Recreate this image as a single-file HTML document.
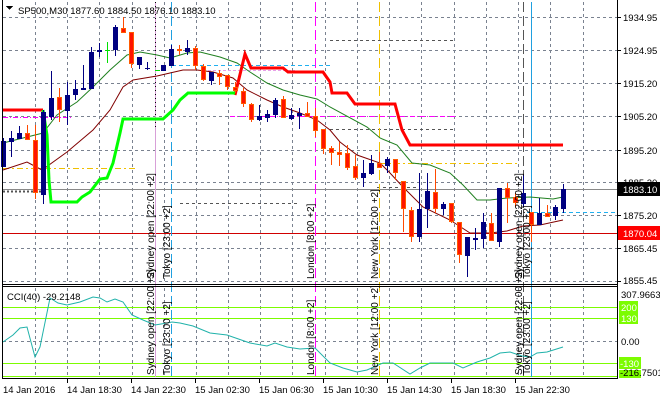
<!DOCTYPE html>
<html><head><meta charset="utf-8"><style>
html,body{margin:0;padding:0;background:#fff;}
svg{display:block;font-family:"Liberation Sans",sans-serif;font-size:9.5px;}
.g{stroke:#7a8290;stroke-width:1;stroke-dasharray:3,3;fill:none}
.b rect{fill:#000080}
.b line{stroke:#000080}
.r rect{fill:#ff1400;stroke:#ff5a00}
.r line{stroke:#ff4a00}
</style></head><body>
<svg width="660" height="400" viewBox="0 0 660 400" xmlns="http://www.w3.org/2000/svg" shape-rendering="crispEdges">
<rect width="660" height="400" fill="#fff"/>
<g class="g">
<path d="M35.5 2V283M67.5 2V283M99.5 2V283M132.5 2V283M164.5 2V283M196.5 2V283M228.5 2V283M260.5 2V283M292.5 2V283M325.5 2V283M357.5 2V283M389.5 2V283M421.5 2V283M454.5 2V283M486.5 2V283M518.5 2V283M550.5 2V283M583.5 2V283"/>
<path d="M35.5 288V377M67.5 288V377M99.5 288V377M132.5 288V377M164.5 288V377M196.5 288V377M228.5 288V377M260.5 288V377M292.5 288V377M325.5 288V377M357.5 288V377M389.5 288V377M421.5 288V377M454.5 288V377M486.5 288V377M518.5 288V377M550.5 288V377M583.5 288V377"/>
<path d="M3 17.5H617M3 50.5H617M3 83.5H617M3 116.5H617M3 150.5H617M3 182.5H617M3 215.5H617M3 248.5H617M3 281.5H617M3 341.5H617"/>
</g>
<path d="M330 40.5H455M330 129.5H455M180 203.5H297M377 187.5H420" stroke="#555" stroke-dasharray="3,3"/>
<path d="M3 191.5H43" stroke="#555" stroke-width="2" stroke-dasharray="2,2"/>
<path d="M3 189.5H617" stroke="#888"/>
<path d="M3 233.5H617" stroke="#d00000"/>
<path d="M3 117.5H72M230 116.5H455" stroke="#ff00ff" stroke-dasharray="5,2,1,2"/>
<path d="M203 70.5H295" stroke="#e8a0e8" stroke-dasharray="3,2"/>
<path d="M3 168.5H138M380 163.5H520" stroke="#f0c000" stroke-dasharray="6,3,2,3"/>
<path d="M172 65.5H330M527 212.5H617" stroke="#20b0f0" stroke-dasharray="4,3"/>
<path d="M3 307.5H617M3 318.5H617M3 363.5H617M3 376.5H617" stroke="#7cfc00"/>
<path d="M155.5 2V377" stroke="#d8a0d8"/>
<path d="M155.5 2V130" stroke="#000" stroke-dasharray="1,3"/>
<path d="M171.5 2V377" stroke="#20a0e0" stroke-dasharray="10,4"/>
<path d="M315.5 2V377" stroke="#ff00ff" stroke-dasharray="10,4"/>
<path d="M379.5 2V377" stroke="#f0c000" stroke-dasharray="10,4"/>
<path d="M523.5 2V377" stroke="#555" stroke-dasharray="10,4"/>
<path d="M531.5 2V377" stroke="#20a0e0"/>
<g shape-rendering="auto" fill="none">
<polyline stroke="#208020" stroke-width="1" points="3,143 43,133 57,115 77,102 93,87 110,70 127,55 140,52 157,55 170,58 187,53 200,52 220,57 237,63 250,72 267,83 283,90 300,95 317,99 330,107 367,127 380,138 397,145 412,163 430,165 450,173 463,185 477,200 490,200 507,198 530,197 553,199 563,197"/>
<polyline stroke="#800000" stroke-width="1" points="3,170 27,162 42,170 67,152 93,130 110,110 123,87 133,80 157,76 170,73 183,70 197,70 213,72 233,78 247,90 267,100 283,107 300,113 317,120 330,130 340,142 357,155 380,163 390,173 403,187 423,207 450,220 470,233 490,233 507,231 523,226 540,225 563,220"/>
<polyline stroke="#ff0000" stroke-width="3" points="3,110 43,110"/>
<polyline stroke="#ff0000" stroke-width="3" points="235,95 245,54 251,68 283,68 288,72 323,72 330,82 332,93 347,93 355,104 395,104 402,130 410,145 563,145"/>
<polyline stroke="#00ff00" stroke-width="3" points="43,110 47,135 49,180 51,202 77,202 82,197 90,192 100,179 107,178 113,163 120,133 123,119 163,119 173,110 180,100 188,93 235,93"/>
<polyline stroke="#20b2aa" stroke-width="1" points="3,342 13,335 20,328 27,327 35,357 40,347 50,298 58,303 67,305 80,302 93,297 100,298 107,302 115,299 123,302 132,315 143,320 155,325 167,323 172,322 180,323 193,326 210,333 227,335 250,343 267,346 275,343 287,347 300,349 315,348 330,363 343,368 357,372 367,370 383,363 393,363 410,374 420,368 430,363 440,363 453,363 463,368 477,362 490,358 500,353 510,352 522,356 530,357 537,353 547,352 563,347"/>
</g>
<g class="b">
<line x1="3.5" y1="138" x2="3.5" y2="167"/><rect x="1" y="141" width="5" height="26"/>
<line x1="11.5" y1="131" x2="11.5" y2="157"/><rect x="9" y="138" width="5" height="4"/>
<line x1="19.5" y1="126" x2="19.5" y2="139"/><rect x="17" y="133" width="5" height="6"/>
<line x1="43.5" y1="110" x2="43.5" y2="204"/><rect x="41" y="112" width="5" height="83"/>
<line x1="51.5" y1="71" x2="51.5" y2="120"/><rect x="49" y="98" width="5" height="19"/>
<line x1="67.5" y1="82" x2="67.5" y2="125"/><rect x="65" y="95" width="5" height="16"/>
<line x1="75.5" y1="80" x2="75.5" y2="100"/><rect x="73" y="89" width="5" height="6"/>
<line x1="83.5" y1="65" x2="83.5" y2="90"/><rect x="81" y="88" width="5" height="2"/>
<line x1="91.5" y1="47" x2="91.5" y2="89"/><rect x="89" y="52" width="5" height="37"/>
<line x1="99.5" y1="43" x2="99.5" y2="57"/><rect x="97" y="50" width="5" height="2"/>
<line x1="115.5" y1="25" x2="115.5" y2="56"/><rect x="113" y="27" width="5" height="23"/>
<line x1="139.5" y1="57" x2="139.5" y2="69"/><rect x="137" y="57" width="5" height="8"/>
<line x1="147.5" y1="62" x2="147.5" y2="70"/><rect x="145" y="68" width="5" height="1"/>
<line x1="163.5" y1="65" x2="163.5" y2="71"/><rect x="161" y="65" width="5" height="6"/>
<line x1="171.5" y1="45" x2="171.5" y2="66"/><rect x="169" y="49" width="5" height="17"/>
<line x1="187.5" y1="40" x2="187.5" y2="55"/><rect x="185" y="48" width="5" height="4"/>
<line x1="211.5" y1="72" x2="211.5" y2="85"/><rect x="209" y="72" width="5" height="9"/>
<line x1="259.5" y1="105" x2="259.5" y2="121"/><rect x="257" y="116" width="5" height="4"/>
<line x1="267.5" y1="110" x2="267.5" y2="122"/><rect x="265" y="114" width="5" height="4"/>
<line x1="275.5" y1="98" x2="275.5" y2="118"/><rect x="273" y="100" width="5" height="15"/>
<line x1="291.5" y1="108" x2="291.5" y2="120"/><rect x="289" y="115" width="5" height="4"/>
<line x1="299.5" y1="108" x2="299.5" y2="129"/><rect x="297" y="113" width="5" height="3"/>
<line x1="363.5" y1="160" x2="363.5" y2="187"/><rect x="361" y="173" width="5" height="5"/>
<line x1="371.5" y1="155" x2="371.5" y2="175"/><rect x="369" y="163" width="5" height="11"/>
<line x1="387.5" y1="157" x2="387.5" y2="173"/><rect x="385" y="159" width="5" height="7"/>
<line x1="419.5" y1="173" x2="419.5" y2="242"/><rect x="417" y="209" width="5" height="28"/>
<line x1="427.5" y1="173" x2="427.5" y2="228"/><rect x="425" y="191" width="5" height="18"/>
<line x1="443.5" y1="202" x2="443.5" y2="215"/><rect x="441" y="204" width="5" height="5"/>
<line x1="467.5" y1="237" x2="467.5" y2="277"/><rect x="465" y="237" width="5" height="19"/>
<line x1="475.5" y1="228" x2="475.5" y2="250"/><rect x="473" y="238" width="5" height="2"/>
<line x1="483.5" y1="213" x2="483.5" y2="248"/><rect x="481" y="222" width="5" height="17"/>
<line x1="499.5" y1="188" x2="499.5" y2="247"/><rect x="497" y="188" width="5" height="54"/>
<line x1="523.5" y1="175" x2="523.5" y2="207"/><rect x="521" y="193" width="5" height="11"/>
<line x1="539.5" y1="198" x2="539.5" y2="225"/><rect x="537" y="213" width="5" height="12"/>
<line x1="555.5" y1="205" x2="555.5" y2="220"/><rect x="553" y="207" width="5" height="9"/>
<line x1="563.5" y1="184" x2="563.5" y2="213"/><rect x="561" y="189" width="5" height="20"/>
</g>
<path d="M107.5 42V63M105 50.5H110M155 70.5H160" stroke="#00e000"/>
<g class="r">
<line x1="27.5" y1="125" x2="27.5" y2="140"/><rect x="25.5" y="133.5" width="4" height="6"/>
<line x1="35.5" y1="125" x2="35.5" y2="199"/><rect x="33.5" y="140.5" width="4" height="52"/>
<line x1="59.5" y1="88" x2="59.5" y2="122"/><rect x="57.5" y="97.5" width="4" height="12"/>
<line x1="123.5" y1="17" x2="123.5" y2="33"/><rect x="121.5" y="28.5" width="4" height="4"/>
<line x1="131.5" y1="32" x2="131.5" y2="68"/><rect x="129.5" y="32.5" width="4" height="31"/>
<line x1="179.5" y1="45" x2="179.5" y2="55"/><rect x="177.5" y="49.5" width="4" height="1"/>
<line x1="195.5" y1="46" x2="195.5" y2="70"/><rect x="193.5" y="48.5" width="4" height="17"/>
<line x1="203.5" y1="64" x2="203.5" y2="81"/><rect x="201.5" y="66.5" width="4" height="13"/>
<line x1="219.5" y1="70" x2="219.5" y2="85"/><rect x="217.5" y="73.5" width="4" height="3"/>
<line x1="227.5" y1="75" x2="227.5" y2="90"/><rect x="225.5" y="75.5" width="4" height="11"/>
<line x1="235.5" y1="82" x2="235.5" y2="93"/><rect x="233.5" y="87.5" width="4" height="3"/>
<line x1="243.5" y1="88" x2="243.5" y2="107"/><rect x="241.5" y="91.5" width="4" height="12"/>
<line x1="251.5" y1="103" x2="251.5" y2="122"/><rect x="249.5" y="104.5" width="4" height="15"/>
<line x1="283.5" y1="96" x2="283.5" y2="118"/><rect x="281.5" y="99.5" width="4" height="18"/>
<line x1="307.5" y1="102" x2="307.5" y2="117"/><rect x="305.5" y="113.5" width="4" height="3"/>
<line x1="315.5" y1="108" x2="315.5" y2="137"/><rect x="313.5" y="116.5" width="4" height="14"/>
<line x1="323.5" y1="129" x2="323.5" y2="154"/><rect x="321.5" y="129.5" width="4" height="19"/>
<line x1="331.5" y1="146" x2="331.5" y2="165"/><rect x="329.5" y="148.5" width="4" height="4"/>
<line x1="339.5" y1="142" x2="339.5" y2="166"/><rect x="337.5" y="152.5" width="4" height="2"/>
<line x1="347.5" y1="145" x2="347.5" y2="170"/><rect x="345.5" y="153.5" width="4" height="14"/>
<line x1="355.5" y1="155" x2="355.5" y2="180"/><rect x="353.5" y="166.5" width="4" height="11"/>
<line x1="379.5" y1="152" x2="379.5" y2="168"/><rect x="377.5" y="163.5" width="4" height="4"/>
<line x1="395.5" y1="159" x2="395.5" y2="180"/><rect x="393.5" y="159.5" width="4" height="13"/>
<line x1="403.5" y1="181" x2="403.5" y2="232"/><rect x="401.5" y="181.5" width="4" height="27"/>
<line x1="411.5" y1="207" x2="411.5" y2="242"/><rect x="409.5" y="210.5" width="4" height="26"/>
<line x1="435.5" y1="169" x2="435.5" y2="213"/><rect x="433.5" y="192.5" width="4" height="16"/>
<line x1="451.5" y1="203" x2="451.5" y2="223"/><rect x="449.5" y="203.5" width="4" height="18"/>
<line x1="459.5" y1="222" x2="459.5" y2="263"/><rect x="457.5" y="222.5" width="4" height="32"/>
<line x1="491.5" y1="213" x2="491.5" y2="241"/><rect x="489.5" y="223.5" width="4" height="17"/>
<line x1="507.5" y1="183" x2="507.5" y2="223"/><rect x="505.5" y="188.5" width="4" height="9"/>
<line x1="515.5" y1="193" x2="515.5" y2="207"/><rect x="513.5" y="197.5" width="4" height="5"/>
<line x1="531.5" y1="212" x2="531.5" y2="242"/><rect x="529.5" y="212.5" width="4" height="12"/>
<line x1="547.5" y1="205" x2="547.5" y2="217"/><rect x="545.5" y="213.5" width="4" height="3"/>
</g>
<g fill="#000" font-size="10">
<text transform="translate(154,279) rotate(-90)">Sydney open  [22:00 +2]</text>
<text transform="translate(170,279) rotate(-90)">Tokyo  [23:00 +2]</text>
<text transform="translate(314,279) rotate(-90)">London  [8:00 +2]</text>
<text transform="translate(378,279) rotate(-90)">New York  [12:00 +2]</text>
<text transform="translate(522,279) rotate(-90)">Sydney open  [22:00 +2]</text>
<text transform="translate(530,279) rotate(-90)">Tokyo  [23:00 +2]</text>
<text transform="translate(154,375) rotate(-90)">Sydney open  [22:00 +2]</text>
<text transform="translate(170,375) rotate(-90)">Tokyo  [23:00 +2]</text>
<text transform="translate(314,375) rotate(-90)">London  [8:00 +2]</text>
<text transform="translate(378,375) rotate(-90)">New York  [12:00 +2]</text>
<text transform="translate(522,375) rotate(-90)">Sydney open  [22:00 +2]</text>
<text transform="translate(530,375) rotate(-90)">Tokyo  [23:00 +2]</text>
</g>
<path d="M2.5 0V378M617.5 0V378M2 284.5H618M2 286.5H618M2 378.5H618" stroke="#000"/>
<path d="M617 17.5H621M617 50.5H621M617 83.5H621M617 116.5H621M617 150.5H621M617 182.5H621M617 215.5H621M617 248.5H621M617 281.5H621M67.5 378V383M131.5 378V383M195.5 378V383M259.5 378V383M323.5 378V383M387.5 378V383M451.5 378V383M515.5 378V383" stroke="#000"/>
<path d="M6 6H13L9.5 10Z" fill="#000"/>
<text x="18" y="14" fill="#000">SP500,M30  1877.60 1884.50 1876.10 1883.10</text>
<text x="7" y="300" fill="#000">CCI(40) -29.2148</text>
<g fill="#000">
<text x="623" y="21">1934.95</text>
<text x="623" y="54">1924.95</text>
<text x="623" y="87">1915.20</text>
<text x="623" y="120">1905.20</text>
<text x="623" y="154">1895.20</text>
<text x="623" y="186">1885.20</text>
<text x="623" y="219">1875.20</text>
<text x="623" y="252">1865.45</text>
<text x="623" y="284">1855.45</text>
<text x="621" y="298">307.9663</text>
<text x="621" y="345">0.00</text>
</g>
<rect x="618" y="182" width="42" height="14" fill="#000"/>
<text x="623" y="193" fill="#fff">1883.10</text>
<rect x="618" y="226" width="42" height="14" fill="#ff0000"/>
<text x="623" y="237" fill="#fff">1870.04</text>
<rect x="619" y="301" width="19" height="12" fill="#7cfc00"/>
<text x="621" y="311" fill="#fff">200</text>
<rect x="619" y="312" width="19" height="12" fill="#7cfc00"/>
<text x="621" y="322" fill="#fff">130</text>
<rect x="619" y="357" width="22" height="12" fill="#7cfc00"/>
<text x="620" y="367" fill="#fff">-130</text>
<rect x="619" y="370" width="22" height="8" fill="#7cfc00"/>
<text x="620" y="376" fill="#000">-216.7501</text>
<g fill="#000">
<text x="3" y="393">14 Jan 2016</text>
<text x="67" y="393">14 Jan 18:30</text>
<text x="131" y="393">14 Jan 22:30</text>
<text x="195" y="393">15 Jan 02:30</text>
<text x="259" y="393">15 Jan 06:30</text>
<text x="323" y="393">15 Jan 10:30</text>
<text x="387" y="393">15 Jan 14:30</text>
<text x="451" y="393">15 Jan 18:30</text>
<text x="515" y="393">15 Jan 22:30</text>
</g>
</svg>
</body></html>
